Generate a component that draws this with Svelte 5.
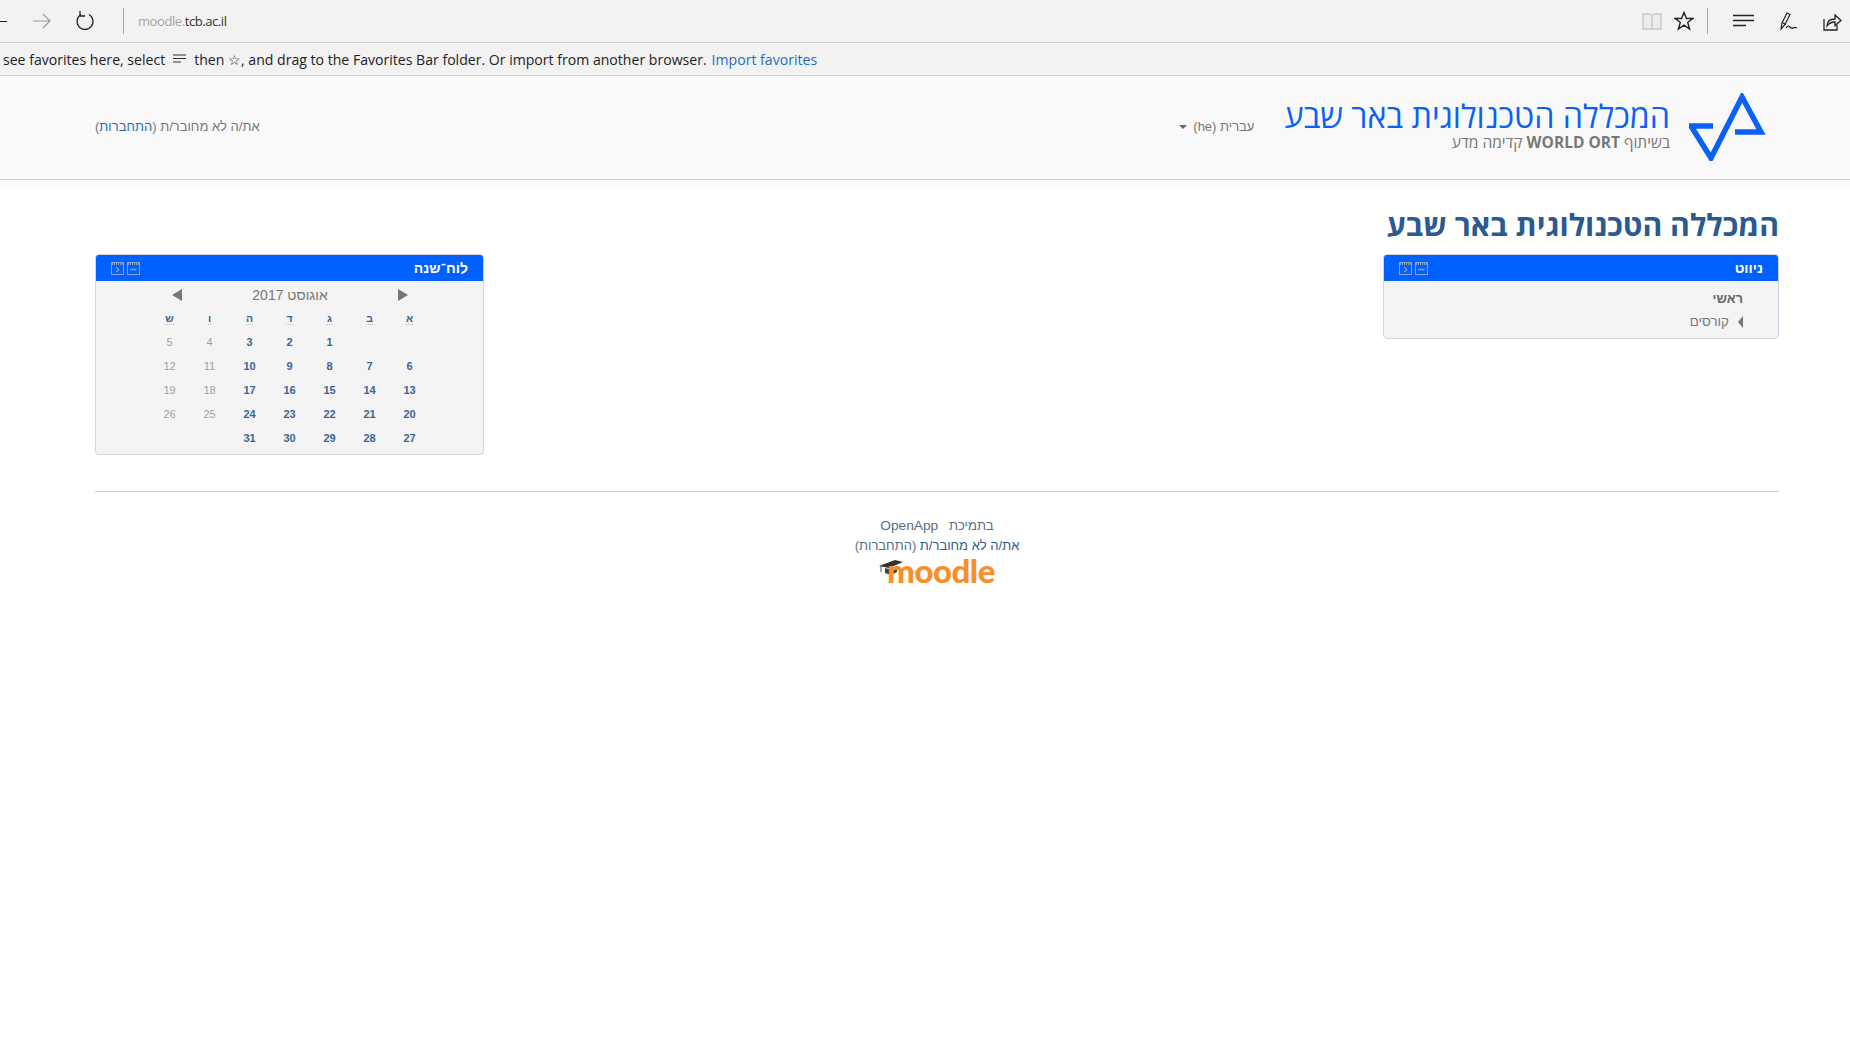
<script>
  const dayNames = ['א', 'ב', 'ג', 'ד', 'ה', 'ו', 'ש']
  const weeks = [
    ['', '', 1, 2, 3, 4, 5],
    [6, 7, 8, 9, 10, 11, 12],
    [13, 14, 15, 16, 17, 18, 19],
    [20, 21, 22, 23, 24, 25, 26],
    [27, 28, 29, 30, 31, '', '']
  ]
</script>

{#snippet blockIcons()}
  <span class="block-icons">
    <svg width="13" height="13" viewBox="0 0 13 13" fill="none" stroke="#8ea3c4">
      <rect x="0.5" y="0.5" width="12" height="12" />
      <path d="M1 2h11" stroke-width="2" stroke-dasharray="1 1" />
      <path d="M5 5l3 2.5-3 2.5" stroke-width="1.2" />
    </svg>
    <svg width="13" height="13" viewBox="0 0 13 13" fill="none" stroke="#8ea3c4">
      <rect x="0.5" y="0.5" width="12" height="12" />
      <path d="M1 2h11" stroke-width="2" stroke-dasharray="1 1" />
      <path d="M3.5 7.5h6" stroke-width="1.4" />
    </svg>
  </span>
{/snippet}

<div class="chrome">
  <div class="toolbar">
    <div class="nav-buttons">
      <span class="back"></span>
      <svg class="forward" width="20" height="18" viewBox="0 0 20 18" fill="none" stroke="#9a9a9a" stroke-width="1.2">
        <path d="M1 9h17M11 2l7 7-7 7" />
      </svg>
      <svg class="reload" width="20" height="22" viewBox="0 0 20 22" fill="none" stroke="#222" stroke-width="1.3">
        <path d="M6 4.5a8 8 0 1 0 8 0" />
        <path d="M5 1v5h5" />
      </svg>
    </div>
    <span class="sep"></span>
    <span class="url"><span class="faded">moodle.</span>tcb.ac.il</span>
    <div class="tools">
      <svg width="20" height="18" viewBox="0 0 20 18" fill="#ececec" stroke="#c8c8c8" stroke-width="1.4">
        <path d="M1 2h5c2 0 4 1 4 2 0-1 2-2 4-2h5v15h-6c-1 0-3 0-3 0s-2 0-3 0H1zM10 4v13" />
      </svg>
      <svg class="star" width="20" height="20" viewBox="0 0 20 20" fill="none" stroke="#222" stroke-width="1.4">
        <path d="M10 1.5l2.5 6h6.3l-5.1 4 1.9 6.5-5.6-3.8-5.6 3.8 1.9-6.5-5.1-4h6.3z" />
      </svg>
      <span class="sep tool-sep"></span>
      <svg class="lines" width="21" height="14" viewBox="0 0 21 14" stroke="#222" stroke-width="1.3">
        <path d="M0 1.5h21M0 6.5h21M0 11.5h13" />
      </svg>
      <svg class="pen" width="18" height="20" viewBox="0 0 18 20" fill="none" stroke="#222" stroke-width="1.2">
        <path d="M1 18l1-6 5-10 3 1.5-5 10zM3 12l3 1.5" />
        <path d="M6 17c2-3 3-2 4-1s2 2 3 1 2-1 4 0" />
      </svg>
      <svg class="share" width="19" height="19" viewBox="0 0 19 19" fill="none" stroke="#222" stroke-width="1.3">
        <path d="M1 7v11h13v-5" />
        <path d="M4 14c0-5 3-7 8-7V3l6 5.5-6 5V10c-3 0-6 1-8 4z" />
      </svg>
    </div>
  </div>

  <div class="favbar">
    <span>see favorites here, select</span>
    <svg width="13" height="10" viewBox="0 0 13 10" stroke="#333">
      <path d="M0 1h13M0 4.5h13M0 8h8" />
    </svg>
    <span>then ☆, and drag to the Favorites Bar folder. Or import from another browser.</span>
    <a href="#import" class="import">Import favorites</a>
  </div>
</div>

<div class="site" dir="rtl">
  <header class="site-header">
    <div class="brand">
      <svg class="logo" width="80" height="68" viewBox="0 0 80 68" fill="none" stroke="#0a62f5" stroke-width="5.5">
        <path d="M1 33h24M3 33l20 32L54 4l19 35H47" />
      </svg>
      <div class="brand-text">
        <div class="brand-title">המכללה הטכנולוגית באר שבע</div>
        <div class="brand-sub">בשיתוף <b>WORLD ORT</b> קדימה מדע</div>
      </div>
    </div>
    <div class="lang">עברית ‎(he)‎ <span class="caret"></span></div>
    <div class="login">את/ה לא מחובר/ת (<a href="#login">התחברות</a>)</div>
  </header>
  <div class="header-strip"></div>

  <main class="page">
    <h1>המכללה הטכנולוגית באר שבע</h1>

    <div class="columns">
      <section class="block nav-block">
        <div class="block-head">
          <span class="block-title">ניווט</span>
          {@render blockIcons()}
        </div>
        <div class="nav-body">
          <div class="nav-home">ראשי</div>
          <div class="nav-item">
            <span class="tri-left small"></span>
            <span>קורסים</span>
          </div>
        </div>
      </section>

      <section class="block cal-block">
        <div class="block-head">
          <span class="block-title">לוח־שנה</span>
          {@render blockIcons()}
        </div>
        <div class="cal-body">
          <div class="cal-month">
            <span class="tri-right"></span>
            <span>אוגוסט 2017</span>
            <span class="tri-left"></span>
          </div>
          <div class="cal-grid">
            {#each dayNames as name}
              <div class="cell"><abbr>{name}</abbr></div>
            {/each}
            {#each weeks as week}
              {#each week as day, i}
                <div class="cell {i > 4 ? 'weekend' : 'weekday'}">{day}</div>
              {/each}
            {/each}
          </div>
        </div>
      </section>
    </div>

    <footer class="site-footer">
      <div class="credit">בתמיכת&nbsp;&nbsp; <span class="openapp">OpenApp</span></div>
      <div class="credit"><a href="#login">את/ה לא מחובר/ת</a> (התחברות)</div>
      <div class="moodle" dir="ltr">
        <svg class="cap" width="24" height="15" viewBox="0 0 24 15">
          <path d="M0 6L16 0l8 2-14 6z" fill="#333" />
          <path d="M6 8l4 1 8-3v6c-4 3-8 3-12 1z" fill="#444" />
          <path d="M2 6v6" stroke="#555" />
        </svg>
        <span>moodle</span>
      </div>
    </footer>
  </main>
</div>

<style>
  :global(body) {
    background: #fff;
    font-family: "Liberation Sans", Arial, sans-serif;
  }

  .chrome {
    font-family: "Open Sans", sans-serif;
    background: #f2f2f2;
  }

  .toolbar {
    display: flex;
    align-items: center;
    height: 42px;
    border-bottom: 1px solid #cfcfcf;
  }

  .nav-buttons {
    display: flex;
    align-items: center;
    width: 123px;
  }

  .back {
    width: 7px;
    height: 1px;
    background: #222;
    margin-right: 25px;
  }

  .forward {
    margin-right: 23px;
  }

  .sep {
    width: 1px;
    height: 26px;
    background: #a9a9a9;
  }

  .url {
    margin-left: 14px;
    margin-top: -1px;
    font-size: 13px;
    letter-spacing: -0.42px;
    color: #333;
  }

  .faded {
    color: #a4a4a4;
  }

  .tools {
    margin-left: auto;
    display: flex;
    align-items: center;
    padding-right: 8px;
  }

  .star {
    margin-left: 12px;
  }

  .tool-sep {
    margin: 0 25px 0 13px;
  }

  .pen {
    margin-left: 26px;
  }

  .share {
    margin-left: 25px;
  }

  .favbar {
    display: flex;
    align-items: center;
    height: 32px;
    padding-left: 3px;
    font-size: 14.08px;
    color: #222;
    border-bottom: 1px solid #d4d4d4;
    white-space: nowrap;
  }

  .favbar svg {
    margin: 0 8px 0 8px;
  }

  .import {
    margin-left: 5px;
    color: #1b6ec2;
    text-decoration: none;
  }

  .site-header {
    display: flex;
    align-items: center;
    height: 103px;
    padding: 0 82px 0 95px;
    background: #f9f9f9;
    border-bottom: 1px solid #cfcfcf;
  }

  .brand {
    display: flex;
    align-items: center;
    gap: 18px;
  }

  .logo {
    margin-top: -2px;
  }

  .brand-text {
    margin-top: -7px;
  }

  .brand-title {
    font-family: "Open Sans", sans-serif;
    font-size: 32.2px;
    line-height: 36px;
    color: #0a62f5;
  }

  .brand-sub {
    font-family: "Open Sans", sans-serif;
    font-size: 15.5px;
    line-height: 16px;
    color: #777;
  }

  .lang {
    margin-right: 30px;
    margin-top: -3px;
    font-size: 13px;
    color: #777;
  }

  .caret {
    display: inline-block;
    margin-right: 3px;
    vertical-align: middle;
    border-top: 4px solid #666;
    border-left: 4px solid transparent;
    border-right: 4px solid transparent;
  }

  .login {
    margin-right: auto;
    margin-top: -2px;
    font-size: 13px;
    color: #777;
  }

  .login a {
    color: #2a6db5;
    text-decoration: none;
  }

  .header-strip {
    height: 5px;
    background: #fafafa;
  }

  .page {
    padding: 0 71px 0 95px;
  }

  h1 {
    margin: 24px 0 14px;
    font-family: "Open Sans", sans-serif;
    font-size: 30.2px;
    line-height: 31px;
    font-weight: 700;
    color: #2b5a8f;
  }

  .columns {
    display: flex;
    justify-content: space-between;
    align-items: flex-start;
  }

  .block {
    box-sizing: border-box;
    background: #f4f4f4;
    border: 1px solid #d3d3e3;
    border-radius: 4px;
    overflow: hidden;
  }

  .nav-block {
    width: 396px;
    height: 85px;
  }

  .cal-block {
    width: 389px;
    height: 201px;
  }

  .block-head {
    display: flex;
    justify-content: space-between;
    align-items: center;
    height: 26px;
    padding: 0 15px;
    background: #0061fe;
    color: #fff;
    font-size: 14px;
    font-weight: 700;
  }

  .block-icons {
    display: flex;
    flex-direction: row-reverse;
    gap: 3px;
  }

  .nav-body {
    padding: 9px 35px 0 0;
    font-size: 13px;
    color: #777;
  }

  .nav-home {
    font-weight: 700;
    color: #666;
    line-height: 17px;
  }

  .nav-item {
    display: flex;
    align-items: center;
    gap: 9px;
    margin-top: 6px;
    line-height: 17px;
    font-size: 13.4px;
  }

  .tri-left {
    display: inline-block;
    border-right: 10px solid #777;
    border-top: 6px solid transparent;
    border-bottom: 6px solid transparent;
  }

  .tri-right {
    display: inline-block;
    border-left: 10px solid #777;
    border-top: 6px solid transparent;
    border-bottom: 6px solid transparent;
  }

  .tri-left.small {
    border-right-width: 5px;
  }

  .cal-body {
    padding-top: 1px;
  }

  .cal-month {
    display: flex;
    justify-content: space-between;
    align-items: center;
    height: 26px;
    padding: 0 75px 0 76px;
    font-size: 14px;
    color: #777;
  }

  .cal-grid {
    display: grid;
    grid-template-columns: repeat(7, 40px);
    grid-auto-rows: 24px;
    justify-content: center;
    margin-top: -2px;
    font-size: 11px;
  }

  .cell {
    display: flex;
    align-items: center;
    justify-content: center;
  }

  abbr {
    color: #3a6496;
    font-weight: 700;
    font-size: 10.5px;
    border-bottom: 1px dotted #bbb;
  }

  .weekday {
    color: #3a6496;
    font-weight: 700;
  }

  .weekend {
    color: #a0a0a0;
  }

  .site-footer {
    margin-top: 36px;
    padding-top: 24px;
    border-top: 1px solid #ccc;
    text-align: center;
    font-size: 13px;
    line-height: 20px;
    color: #5a6a80;
  }

  .site-footer a {
    color: #2b5a8f;
    text-decoration: none;
  }

  .openapp {
    font-size: 13.7px;
  }

  .moodle {
    display: flex;
    justify-content: center;
    align-items: flex-end;
    height: 28px;
    font-family: Lato, sans-serif;
    font-size: 33px;
    line-height: 28px;
    font-weight: 900;
    letter-spacing: -0.5px;
    color: #f98f2a;
  }

  .cap {
    margin: 0 -16px 9px 0;
  }
</style>
